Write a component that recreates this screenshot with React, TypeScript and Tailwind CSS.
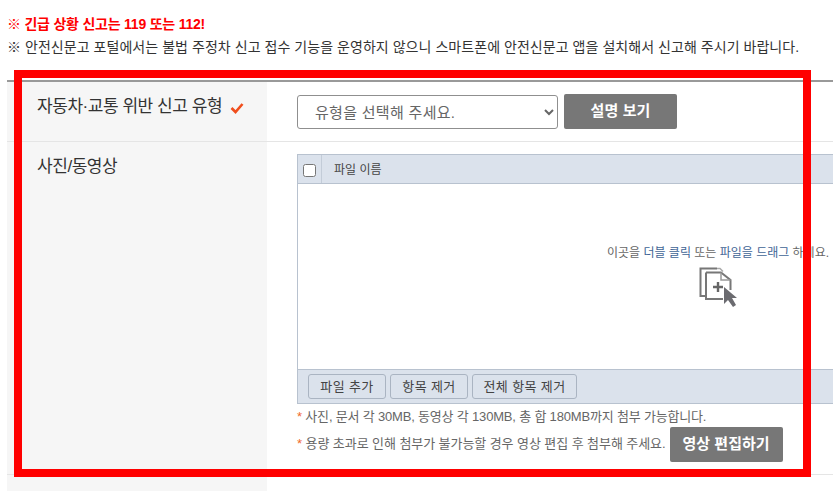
const font = "font-['Liberation_Sans','Noto_Sans_CJK_KR',sans-serif]";

function DropIcon() {
  return (
    <svg width="38" height="42" viewBox="0 0 38 42" className="block">
      <path d="M7 29H1.5V1.5H18" fill="none" stroke="#777" strokeWidth="2" />
      <path d="M18 1.5h3l3 3" fill="none" stroke="#aaa" strokeWidth="1.5" />
      <path d="M7 5.5h15l9.500 7.500v10M7 5.500v26.500h17" fill="none" stroke="#777" strokeWidth="2" />
      <path d="M22 5.500v7.500h9.500" fill="none" stroke="#999" strokeWidth="1.500" />
      <path d="M19 15v10M14 20h10" fill="none" stroke="#666" strokeWidth="2.4" />
      <path d="M25 20v17l4-4 5 7 3-2-4-7h5z" fill="#6b6b70" />
    </svg>
  );
}

function ToolButton({ label, width }: { label: string; width: string }) {
  return (
    <button className={`h-[25px] ${width} rounded-[3px] border border-[#aab4c2] bg-[#dbe2ec] text-[13px] tracking-[0.4px] text-[#444]`}>
      {label}
    </button>
  );
}

export default function App() {
  return (
    <div className={`relative h-[491px] w-[833px] overflow-hidden bg-white ${font}`}>
      <div className="px-[7px] pt-[15px]">
        <p className="text-[14px] leading-[19px] font-bold tracking-[-0.22px] text-[#ff0000]">※ 긴급 상황 신고는 119 또는 112!</p>
        <p className="mt-[4px] text-[14px] leading-[19px] tracking-[0.05px] whitespace-nowrap text-[#333]">
          ※ 안전신문고 포털에서는 불법 주정차 신고 접수 기능을 운영하지 않으니 스마트폰에 안전신문고 앱을 설치해서 신고해 주시기 바랍니다.
        </p>
      </div>

      <div className="mt-[23px] ml-[7px] w-[826px] border-t-2 border-[#999]">
        <div className="flex h-[60px] border-b border-[#e5e5e5]">
          <div className="flex w-[260px] shrink-0 items-start bg-[#f6f6f6] pt-[13px] pl-[30px]">
            <span className="text-[17px] leading-[24px] tracking-[-0.45px] text-[#333]">자동차·교통 위반 신고 유형</span>
            <svg width="14" height="12" viewBox="0 0 14 12" className="mt-[7px] ml-[8px]">
              <path d="M1.5 6l4 4 7-8" fill="none" stroke="#f04e1c" strokeWidth="2.6" />
            </svg>
          </div>
          <div className="flex items-start gap-[6px] pt-[12px] pl-[30px]">
            <select className="mt-[1px] h-[34px] w-[261px] rounded-[3px] border border-[#8f8f8f] bg-white pl-[13px] text-[15px] tracking-[0.3px] text-[#666]">
              <option>유형을 선택해 주세요.</option>
            </select>
            <button className="h-[35px] w-[113px] rounded-[2px] bg-[#777] text-[15px] font-bold tracking-[0.1px] text-white">설명 보기</button>
          </div>
        </div>

        <div className="flex h-[333px] border-b border-[#e5e5e5]">
          <div className="w-[260px] shrink-0 bg-[#f6f6f6] pt-[13px] pl-[30px]">
            <span className="text-[17px] leading-[24px] tracking-[-0.45px] text-[#333]">사진/동영상</span>
          </div>
          <div className="pt-[12px] pl-[30px]">
            <div className="w-[842px] border border-[#b8c2cf]">
              <div className="flex h-[29px] border-b border-[#b8c2cf] bg-[#dbe2ec]">
                <div className="flex w-[24px] items-center justify-center border-r border-[#c3ccd8]">
                  <input type="checkbox" className="mt-[2px] h-[13px] w-[13px]" />
                </div>
                <div className="pt-[6px] pl-[12px] text-[12px] leading-[18px] text-[#444]">파일 이름</div>
              </div>
              <div className="flex h-[185px] flex-col items-center pt-[62px]">
                <p className="text-[12px] leading-[15px] text-[#666]">
                  이곳을 <span className="text-[#3f6596]">더블 클릭</span> 또는 <span className="text-[#3f6596]">파일을 드래그</span> 하세요.
                </p>
                <div className="mt-[6px]">
                  <DropIcon />
                </div>
              </div>
              <div className="flex h-[34px] items-center gap-[4px] border-t border-[#b8c2cf] bg-[#dbe2ec] pl-[10px]">
                <ToolButton label="파일 추가" width="w-[78px]" />
                <ToolButton label="항목 제거" width="w-[78px]" />
                <ToolButton label="전체 항목 제거" width="w-[105px]" />
              </div>
            </div>
            <p className="mt-[4px] text-[13px] leading-[18px] tracking-[-0.18px] text-[#666]">
              <span className="text-[#f06a2a]">*</span> 사진, 문서 각 30MB, 동영상 각 130MB, 총 합 180MB까지 첨부 가능합니다.
            </p>
            <div className="mt-[1px] flex items-center">
              <p className="mb-[2px] text-[13px] leading-[18px] tracking-[-0.07px] text-[#666]">
                <span className="text-[#f06a2a]">*</span> 용량 초과로 인해 첨부가 불가능할 경우 영상 편집 후 첨부해 주세요.
              </p>
              <button className="ml-[4px] h-[35px] w-[113px] rounded-[2px] bg-[#777] text-[15px] font-bold text-white">영상 편집하기</button>
            </div>
          </div>
        </div>

        <div className="h-[20px] w-[260px] bg-[#f6f6f6]" />
      </div>

      <div className="absolute top-[70px] left-[14px] h-[407px] w-[797px] border-8 border-[#ff0000]" />
    </div>
  );
}
